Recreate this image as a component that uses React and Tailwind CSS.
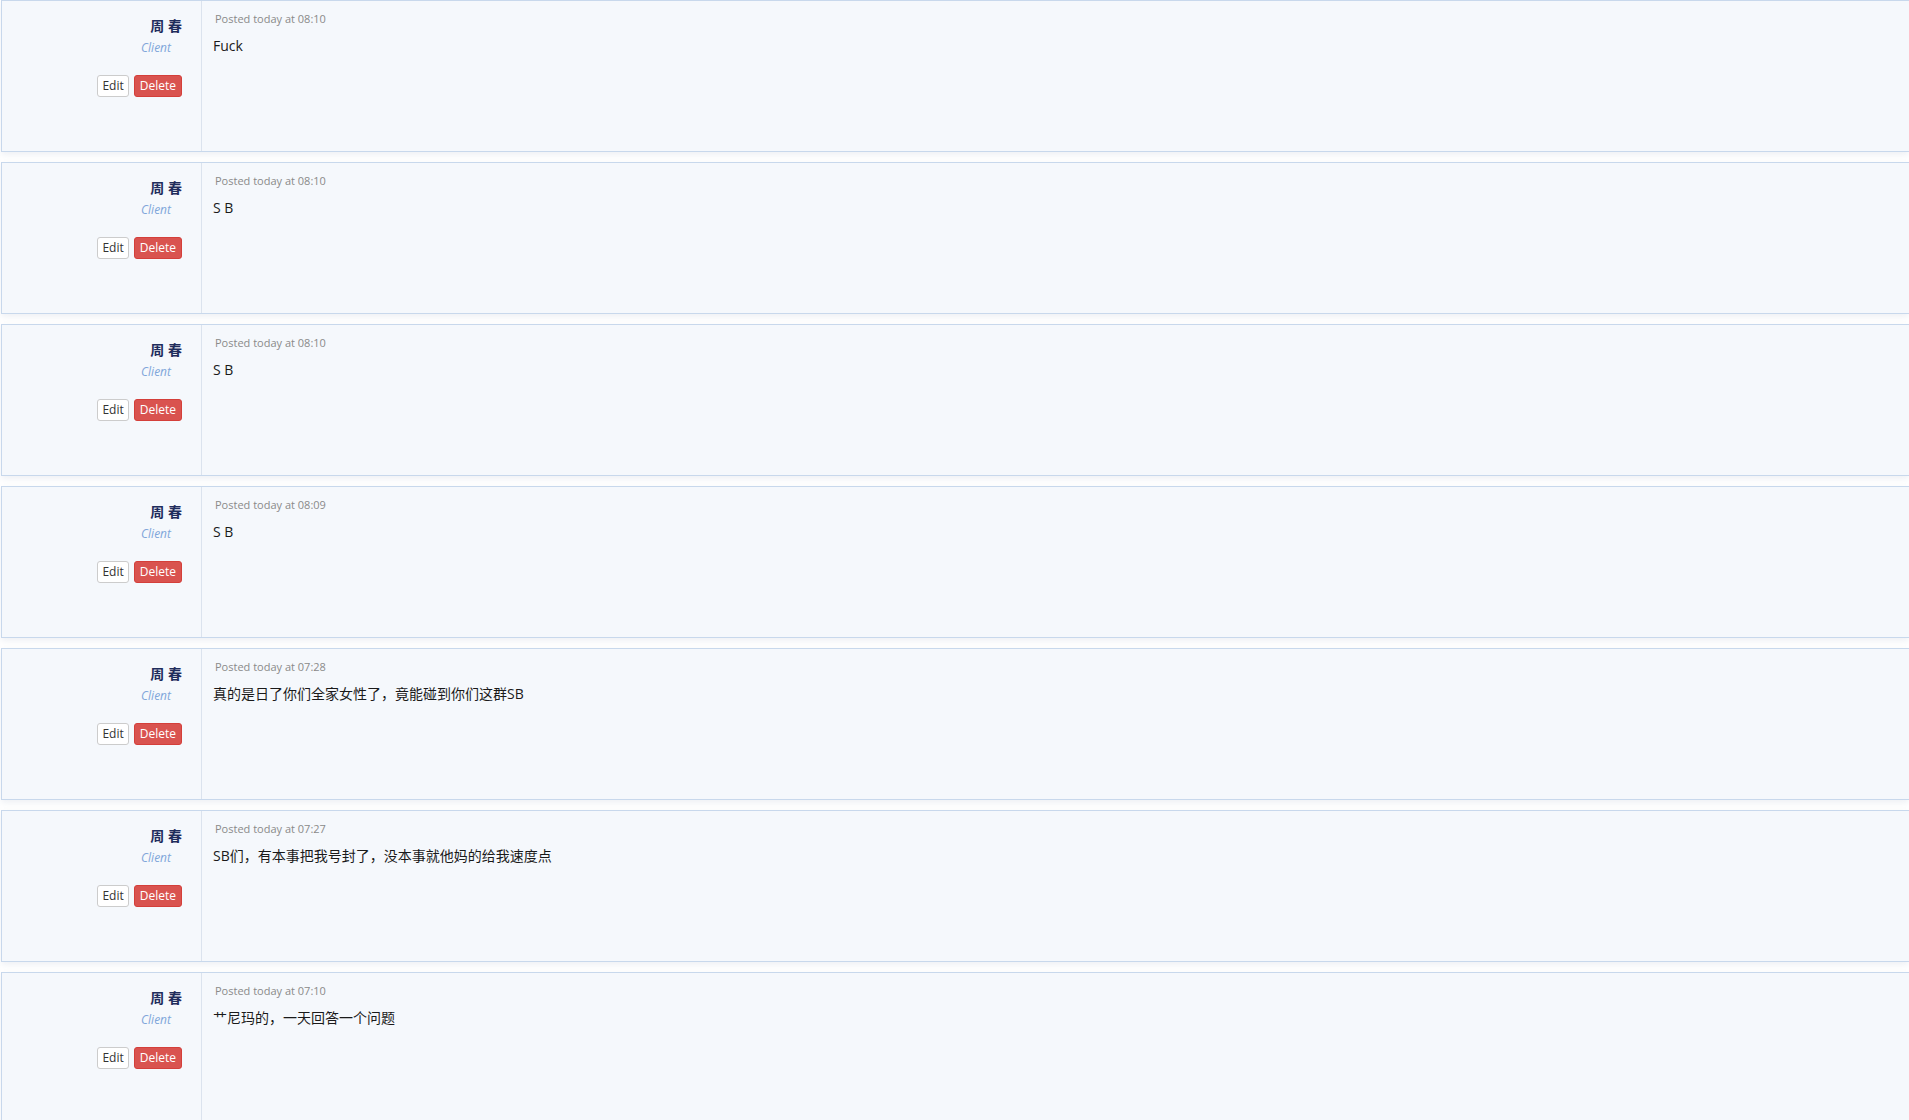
const posts = [
  { id: 1, time: "08:10", text: "Fuck" },
  { id: 2, time: "08:10", text: "S B" },
  { id: 3, time: "08:10", text: "S B" },
  { id: 4, time: "08:09", text: "S B" },
  { id: 5, time: "07:28", text: "真的是日了你们全家女性了，竟能碰到你们这群SB" },
  { id: 6, time: "07:27", text: "SB们，有本事把我号封了，没本事就他妈的给我速度点" },
  { id: 7, time: "07:10", text: "艹尼玛的，一天回答一个问题" },
];

function PostCard({ post }) {
  return (
    <div className="flex h-[152px] bg-[#f5f8fc] border border-r-0 border-[#c8d8ec] shadow-[0_3px_6px_rgba(120,140,170,0.12)]">
      {/* Author column */}
      <div className="w-[200px] shrink-0 border-r border-[#dbe3ee] pt-[15px] pr-[19px] text-right">
        <div className="text-[14px] leading-[20px] font-bold text-[#1f2d5c]">
          周 春
        </div>
        <div className="mt-[4px] pr-[11px] text-[12px] leading-[16px] italic text-[#7fa6da]">
          Client
        </div>
        <div className="mt-[19px] flex justify-end gap-[5px]">
          <button className="h-[22px] px-[4px] rounded-[3px] border border-[#cccccc] bg-white text-[12px] leading-[20px] text-[#333]">
            Edit
          </button>
          <button className="h-[22px] px-[5px] rounded-[3px] border border-[#d43f3a] bg-[#d9534f] text-[12px] leading-[20px] text-white">
            Delete
          </button>
        </div>
      </div>

      {/* Message column */}
      <div className="flex-1 pt-[10px] pl-[11px]">
        <div className="ml-[2px] text-[11px] leading-[16px] text-[#8a8a8a]">
          Posted today at {post.time}
        </div>
        <div className="mt-[9px] text-[14px] leading-[20px] text-[#1a1a1a]">
          {post.text}
        </div>
      </div>
    </div>
  );
}

export default function App() {
  return (
    <div
      className="min-h-screen bg-white pl-px"
      style={{ fontFamily: '"Open Sans", "Noto Sans CJK SC", sans-serif' }}
    >
      <div className="flex flex-col gap-[10px]">
        {posts.map((post) => (
          <PostCard key={post.id} post={post} />
        ))}
      </div>
    </div>
  );
}
